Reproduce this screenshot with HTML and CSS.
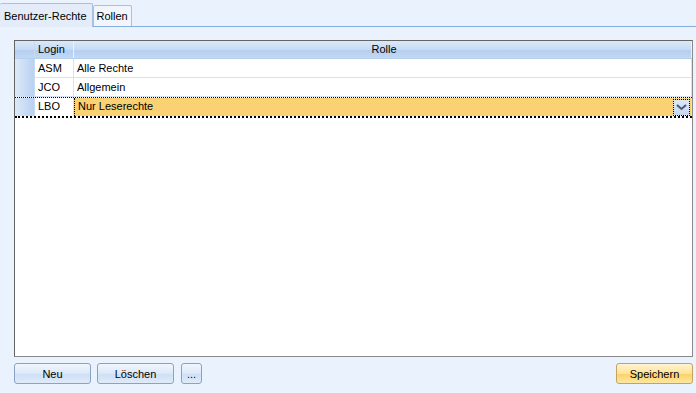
FILE: index.html
```html
<!DOCTYPE html>
<html lang="de">
<head>
  <meta charset="UTF-8" />
  <title>Benutzer-Rechte</title>
  <link rel="stylesheet" href="styles.css">
</head>
<body>
<div class="window">
  <div class="tabs">
    <div class="tab active">Benutzer-Rechte</div>
    <div class="tab">Rollen</div>
  </div>

  <div class="page">
    <div class="grid">
      <div class="row head">
        <div class="rh"></div>
        <div class="cell login">Login</div>
        <div class="cell role center">Rolle</div>
      </div>
      <div class="row">
        <div class="rh"></div>
        <div class="cell login">ASM</div>
        <div class="cell role">Alle Rechte</div>
      </div>
      <div class="row">
        <div class="rh"></div>
        <div class="cell login">JCO</div>
        <div class="cell role">Allgemein</div>
      </div>
      <div class="row current">
        <div class="rh"></div>
        <div class="cell login">LBO</div>
        <div class="cell role edit">
          <span>Nur Leserechte</span>
          <span class="drop">
            <svg width="11" height="7" viewBox="0 0 11 7"><path d="M1 1 L5.5 5 L10 1" fill="none" stroke="#4a5a70" stroke-width="2"/></svg>
          </span>
        </div>
      </div>
    </div>

    <div class="buttons">
      <button class="btn wide">Neu</button>
      <button class="btn wide">Löschen</button>
      <button class="btn small">...</button>
      <button class="btn wide save">Speichern</button>
    </div>
  </div>
</div>
</body>
</html>
```

FILE: styles.css
```css
body {
  margin: 0;
  background: #eaf2fd;
  font-family: 'Liberation Sans', Arial, sans-serif;
  font-size: 11px;
  color: #000;
}
.window {
  width: 696px;
  height: 393px;
  display: flex;
  flex-direction: column;
}
.tabs {
  display: flex;
  align-items: flex-end;
  height: 26px;
  border-bottom: 1px solid #86ade0;
}
.tab {
  height: 20px;
  line-height: 20px;
  padding: 0 3px;
  font-size: 11px;
  white-space: nowrap;
  background: #f2f6fc;
  border: 1px solid #a7c1e2;
  border-bottom: none;
  border-radius: 2px 2px 0 0;
}
.tab.active {
  height: 23px;
  line-height: 24px;
  padding: 0 5px 0 4px;
  background: #e3ecf8;
  border-left: none;
  position: relative;
  top: 1px;
}
.page {
  flex: 1;
  padding: 13px 3px 9px 14px;
  display: flex;
  flex-direction: column;
}
.grid {
  flex: 1;
  background: #fff;
  border: 1px solid #646464;
  border-bottom-color: #8a8a8a;
  border-right-color: #8a8a8a;
}
.row {
  display: flex;
  height: 19px;
}
.row.head {
  height: 17px;
  border-bottom: 1px solid #b7cfee;
  background: linear-gradient(#dbe8f8, #c6dbf5 50%, #b5cff1 55%, #c2d8f4);
}
.rh {
  width: 19px;
  border-right: 1px solid #c9dbf2;
  background: linear-gradient(90deg, #dde9f8, #b9d1f0);
}
.head .rh {
  background: none;
}
.cell {
  line-height: 18px;
  padding-left: 3px;
  border-right: 1px solid #d3e2f5;
  border-bottom: 1px solid #d3e2f5;
  white-space: nowrap;
}
.head .cell {
  border-bottom: none;
  line-height: 17px;
  border-right-color: #eaf2fd;
}
.login {
  width: 35px;
}
.role {
  flex: 1;
}
.center {
  text-align: center;
}
.row.current {
  border-top: 1px dotted #000;
  border-bottom: 2px dotted #000;
  height: 18px;
}
.row.current .cell {
  border-bottom: none;
  line-height: 17px;
}
.edit {
  background: #fad173;
  border-left: 1px dotted #000;
  display: flex;
  justify-content: space-between;
  padding-right: 0;
}
.drop {
  width: 15px;
  height: 15px;
  margin: 1px 1px 0 0;
  border: 1px dotted #000;
  background: linear-gradient(#dbe8f8, #c4d8f2);
  display: flex;
  align-items: center;
  justify-content: center;
}
.buttons {
  display: flex;
  gap: 6px;
  margin-top: 6px;
  height: 21px;
}
.btn {
  font-family: 'Liberation Sans', Arial, sans-serif;
  font-size: 11px;
  height: 21px;
  border: 1px solid #8aa2c4;
  border-radius: 3px;
  background: linear-gradient(#f2f6fd, #dce8f8 50%, #cfdff5 55%, #e0ebf9);
  color: #000;
  padding: 0;
}
.wide {
  width: 77px;
}
.small {
  width: 21px;
  margin-left: 1px;
}
.save {
  margin-left: auto;
  border-color: #c2a360;
  background: linear-gradient(#fff3cf, #ffe39a 50%, #fbd36a 55%, #fde7a4);
}
```
